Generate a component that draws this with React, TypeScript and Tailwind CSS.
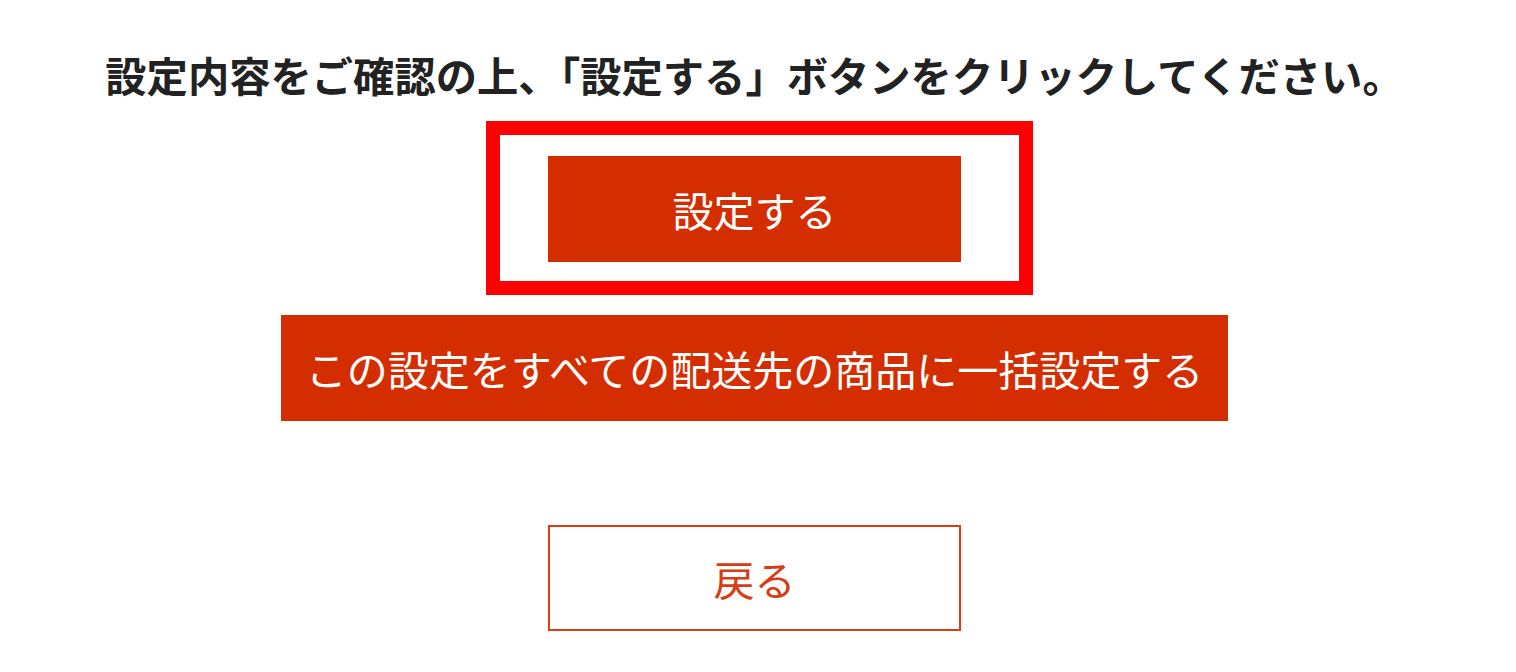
export default function App() {
  return (
    <div className="min-h-[672px] w-[1516px] bg-white font-['Noto_Sans_CJK_JP',sans-serif]">
      <div className="flex w-[1509px] flex-col items-center">
        <p className="mt-[44px] text-[41.3px] font-bold leading-[60px] text-[#222222]">
          設定内容をご確認の上、「設定する」ボタンをクリックしてください。
        </p>

        {/* highlight frame around the primary button */}
        <div className="ml-[10px] mt-[17px] flex border-[14px] border-[#ff0000] pb-[19px] pl-[48px] pr-[58px] pt-[21px]">
          <button className="flex h-[106px] w-[413px] items-center justify-center bg-[#d42e00] text-[41px] leading-none text-white">
            設定する
          </button>
        </div>

        <button className="mt-[20px] flex h-[106px] w-[947px] items-center justify-center bg-[#d42e00] text-[41px] leading-none text-white">
          この設定をすべての配送先の商品に一括設定する
        </button>

        <button className="mt-[104px] flex h-[106px] w-[413px] items-center justify-center border-2 border-[#dc3e14] bg-white text-[41px] leading-none text-[#d83c12]">
          戻る
        </button>
      </div>
    </div>
  );
}
